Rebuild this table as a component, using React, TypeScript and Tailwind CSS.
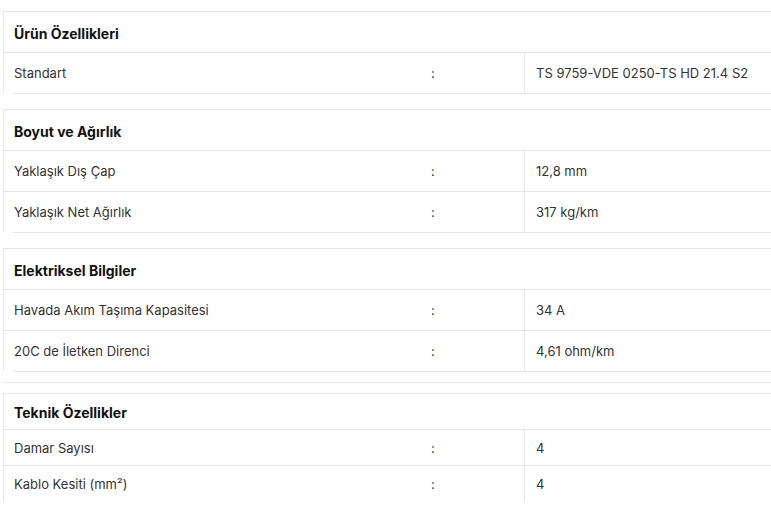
const sections = [
  {
    title: 'Ürün Özellikleri',
    rows: [['Standart', 'TS 9759-VDE 0250-TS HD 21.4 S2']],
  },
  {
    title: 'Boyut ve Ağırlık',
    rows: [
      ['Yaklaşık Dış Çap', '12,8 mm'],
      ['Yaklaşık Net Ağırlık', '317 kg/km'],
    ],
  },
  {
    title: 'Elektriksel Bilgiler',
    rows: [
      ['Havada Akım Taşıma Kapasitesi', '34 A'],
      ['20C de İletken Direnci', '4,61 ohm/km'],
    ],
  },
];

function Row({ label, value, last, compact }: { label: string; value: string; last?: boolean; compact?: boolean }) {
  const h = compact ? (last ? 'h-[36px]' : 'h-[36px] border-b') : last ? 'h-[40px]' : 'h-[41px] border-b';
  return (
    <div className={`flex border-[#e6e6e6] ${h}`}>
      <div className="w-[417px] pl-[10px] pt-[2px] flex items-center">{label}</div>
      <div className="w-[103px] pl-[10px] pt-[2px] flex items-center">:</div>
      <div className="flex-1 pl-[11px] pt-[2px] flex items-center border-l border-[#e6e6e6]">{value}</div>
    </div>
  );
}

export default function App() {
  return (
    <div
      className="w-[771px] h-[505px] overflow-hidden bg-white pt-[11px] text-[13px] text-[#333]"
      style={{ fontFamily: 'Inter, "Open Sans", sans-serif' }}
    >
      {sections.map((s) => (
        <div key={s.title} className="mb-[15px]">
          <div className="ml-[3px] border-l border-t border-[#e6e6e6]">
            <div className="h-[41px] pl-[10px] pt-[2px] flex items-center font-bold text-[14px] text-[#111] border-b border-[#e6e6e6]">
              {s.title}
            </div>
            {s.rows.map((r, i) => (
              <Row key={r[0]} label={r[0]} value={r[1]} last={i === s.rows.length - 1} />
            ))}
          </div>
          <div className="ml-[13px] border-t border-[#e6e6e6]" />
        </div>
      ))}

      {/* extra separator before Teknik */}
      <div className="-mt-[5px] ml-[3px] border-t border-[#e6e6e6]" />

      <div className="mt-[10px] ml-[3px] border-l border-t border-[#e6e6e6]">
        <div className="h-[36px] pl-[10px] pt-[2px] flex items-center font-bold text-[14px] text-[#111] border-b border-[#e6e6e6]">
          Teknik Özellikler
        </div>
        <Row label="Damar Sayısı" value="4" compact />
        <Row label="Kablo Kesiti (mm²)" value="4" compact last />
      </div>
    </div>
  );
}
